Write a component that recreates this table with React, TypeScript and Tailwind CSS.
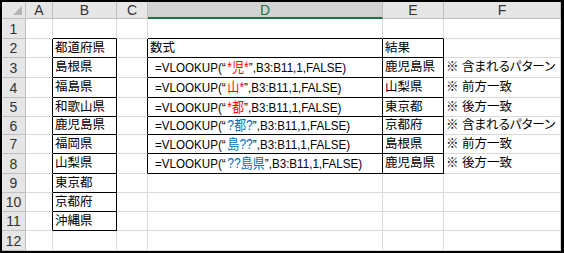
import clsx from "clsx";
import type { ReactNode } from "react";

const FONT = "font-['Liberation_Sans','Noto_Sans_CJK_JP',sans-serif] [font-feature-settings:'palt']";

const COLS = ["A", "B", "C", "D", "E", "F"];

// row heights as seen in the sheet (row 1..12)
const ROW_H = ["h-[20px]", "h-[19px]", "h-[20px]", "h-[20px]", "h-[19px]", "h-[18px]", "h-[19px]", "h-[20px]", "h-[19px]", "h-[19px]", "h-[19px]", "h-[20px]"];

function Red({ children }: { children: ReactNode }) {
  return <span className="text-[14px] text-[#ff0000]">{children}</span>;
}

function Blue({ children }: { children: ReactNode }) {
  return <span className="text-[14px] text-[#0070c0]">{children}</span>;
}

// the sheet's font is narrower than Arial, so squeeze the formula a little
function Formula({ pattern }: { pattern: ReactNode }) {
  return (
    <span className="ml-[5px] inline-block origin-left scale-x-[0.86] text-[13.5px]">
      =VLOOKUP(“<span className="pl-[2px]" />{pattern}”,B3:B11,1,FALSE)
    </span>
  );
}

const prefectures = ["都道府県", "島根県", "福島県", "和歌山県", "鹿児島県", "福岡県", "山梨県", "東京都", "京都府", "沖縄県"];

const lookups: { pattern: ReactNode; result: string; note: string }[] = [
  { pattern: <Red>*児*</Red>, result: "鹿児島県", note: "※ 含まれるパターン" },
  { pattern: <Red>山*</Red>, result: "山梨県", note: "※ 前方一致" },
  { pattern: <Red>*都</Red>, result: "東京都", note: "※ 後方一致" },
  { pattern: <Blue>?都?</Blue>, result: "京都府", note: "※ 含まれるパターン" },
  { pattern: <Blue>島??</Blue>, result: "島根県", note: "※ 前方一致" },
  { pattern: <Blue>??島県</Blue>, result: "鹿児島県", note: "※ 後方一致" },
];

function cellContent(row: number, col: string): ReactNode {
  if (col === "B" && row >= 2 && row <= 11) return prefectures[row - 2];
  if (col === "D" && row === 2) return "数式";
  if (col === "E" && row === 2) return "結果";
  const item = lookups[row - 3];
  if (!item) return null;
  if (col === "D") return <Formula pattern={item.pattern} />;
  if (col === "E") return item.result;
  if (col === "F") return item.note;
  return null;
}

function inBox(row: number, col: string) {
  if (col === "B") return row >= 2 && row <= 11;
  if (col === "D" || col === "E") return row >= 2 && row <= 8;
  return false;
}

function Cell({ row, col }: { row: number; col: string }) {
  const idx = COLS.indexOf(col);
  const next = COLS[idx + 1];
  const blackRight = inBox(row, col) || (next !== undefined && inBox(row, next));
  const blackBottom = inBox(row, col) || inBox(row + 1, col);
  return (
    <div
      className={clsx(
        "flex items-center overflow-visible whitespace-nowrap border-r border-b pl-[2px] text-[12.5px] leading-none text-black",
        blackRight ? "border-r-black" : "border-r-[#d9d9d9]",
        blackBottom ? "border-b-black" : "border-b-[#d9d9d9]",
      )}
    >
      {cellContent(row, col)}
    </div>
  );
}

export default function App() {
  const rows = Array.from({ length: 12 }, (_, i) => i + 1);
  return (
    <div className={clsx("h-[253px] w-[564px] overflow-hidden bg-white", FONT)}>
      <div className="h-full w-full border-t-2 border-l-2 border-r-3 border-b-3 border-black">
        <div className="grid grid-cols-[24px_27px_64px_31px_235px_61px_117px]">
          {/* column headers */}
          <div className="relative h-[17px] border-r border-b border-[#bfbfbf] bg-[#e6e6e6]">
            <svg className="absolute right-[3px] bottom-[3px]" width="9" height="9" viewBox="0 0 9 9">
              <polygon points="9,0 9,9 0,9" fill="#b4b4b4" />
            </svg>
          </div>
          {COLS.map((c) => (
            <div
              key={c}
              className={clsx(
                "flex h-[17px] items-center justify-center border-r text-[14px] leading-none",
                c === "D"
                  ? "border-b-2 border-r-[#bfbfbf] border-b-[#217346] bg-[#d2d2d2] text-[#217346]"
                  : "border-b border-[#bfbfbf] bg-[#e6e6e6] text-[#333333]",
              )}
            >
              {c}
            </div>
          ))}
          {rows.map((r) => (
            <div key={r} className="contents">
              <div
                className={clsx(
                  "flex items-center justify-center border-r border-b border-[#bfbfbf] bg-[#e6e6e6] text-[14px] leading-none text-[#333333]",
                  ROW_H[r - 1],
                )}
              >
                {r}
              </div>
              {COLS.map((c) => (
                <Cell key={c} row={r} col={c} />
              ))}
            </div>
          ))}
        </div>
      </div>
    </div>
  );
}
